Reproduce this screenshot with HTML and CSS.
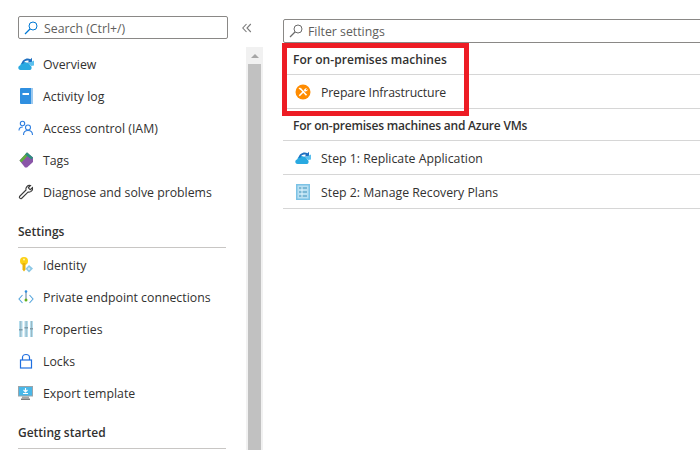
FILE: index.html
```html
<!DOCTYPE html>
<html lang="en">
<head>
<meta charset="utf-8">
<title>Site Recovery</title>
<link rel="stylesheet" href="styles.css">
</head>
<body>
<div class="page">
  <aside class="sidebar">
    <div class="search-row">
      <div class="search">
        <svg class="search-icon" width="14" height="14" viewBox="0 0 14 14"><circle cx="9" cy="5" r="4" fill="none" stroke="#0078d4" stroke-width="1"/><path d="M6 8 1 13" stroke="#0078d4" stroke-width="1.2"/></svg>
        <span>Search (Ctrl+/)</span>
      </div>
      <div class="collapse">
        <svg width="10" height="10" viewBox="0 0 10 10"><path d="M4.500 1 .8 5l3.700 4M8.800 1 5 5l3.800 4" fill="none" stroke="#7a7a7a" stroke-width="1.100"/></svg>
      </div>
    </div>
    <div class="side-body">
      <nav class="menu">
        <div class="item">
          <svg width="16" height="16" viewBox="0 0 16 16"><path d="M2.500 14C-.3 14-.5 10 2.300 9.300 2.800 6.500 5.800 5.300 8 6.500 10.500 6.300 12.300 8 12 9.500 14 9.800 14.300 13.500 12 14Z" fill="#29a9e1"/><path d="M3.500 8C4 3.500 9 1 12.500 3.200L14 1.800V6.500H9.500L11 5C9 4 6 5 5.500 7.500Z" fill="#1e6fc0"/><path d="M10 7.500 16 4.500 16 9.500 13 10Z" fill="#5bc0ee"/></svg>
          <span>Overview</span>
        </div>
        <div class="item">
          <svg width="16" height="16" viewBox="0 0 16 16"><rect x="2" y="0" width="13" height="16" rx="1" fill="#2f8fe0"/><rect x="13" y="0" width="2" height="16" fill="#9cc9ef"/><rect x="4.500" y="5" width="6.500" height="2" fill="#fff"/></svg>
          <span>Activity log</span>
        </div>
        <div class="item">
          <svg width="16" height="16" viewBox="0 0 16 16" fill="none" stroke="#2f7fe0" stroke-width="1.100"><circle cx="4.500" cy="3.500" r="2.200"/><circle cx="10" cy="7.500" r="2.500"/><path d="M1 10.500C1 8.500 2.500 7 4.800 7M5.500 15c0-6 9-6 9 0"/></svg>
          <span>Access control (IAM)</span>
        </div>
        <div class="item">
          <svg width="16" height="16" viewBox="0 0 16 16"><path d="M1.500 8.500 9 .5 15 5.500V10L9 15.500H7Z" fill="#8a55a8"/><path d="M1.500 8.500 9 .5 11 2.200 3.500 10.500Z" fill="#5fae3c"/><path d="M9 .5 15 5.500 13.500 7.500 7 2.500Z" fill="#2d8f7e"/></svg>
          <span>Tags</span>
        </div>
        <div class="item">
          <svg width="16" height="16" viewBox="0 0 16 16" fill="none" stroke="#3b3b3b" stroke-width="1.100"><path d="M1.500 12.500 8 6C7.300 3.500 9.500.8 12.500 1.500L10.300 3.800 12.200 5.700 14.500 3.500C15.200 6.500 12.500 8.700 10 8L3.500 14.500C2.500 15.300.8 13.500 1.500 12.500Z"/></svg>
          <span>Diagnose and solve problems</span>
        </div>
      </nav>
      <h2 class="section">Settings</h2>
      <nav class="menu">
        <div class="item">
          <svg width="16" height="16" viewBox="0 0 16 16"><circle cx="6" cy="4" r="4" fill="#fcd116"/><circle cx="6" cy="2.400" r="1" fill="#fff3b0"/><path d="M4.500 6h3v6.500l-1.500 2-1.500-2Z" fill="#eab308"/><path d="M11 8 15 11.500 11 15.500 7.500 11.800Z" fill="#8cc8e6"/><circle cx="11" cy="11.800" r="1.300" fill="#cfe9f6"/></svg>
          <span>Identity</span>
        </div>
        <div class="item">
          <svg width="16" height="16" viewBox="0 0 16 16" fill="none"><path d="M4.500 6 1 10l3.500 4M11.500 6 15 10l-3.500 4" stroke="#55a5dc" stroke-width="1.100"/><path d="M8 3v7" stroke="#5a7d9c"/><circle cx="8" cy="2.500" r="1.300" fill="#2f8fe0"/><circle cx="8" cy="11" r="1.500" fill="#5fae1c"/></svg>
          <span>Private endpoint connections</span>
        </div>
        <div class="item">
          <svg width="16" height="16" viewBox="0 0 16 16"><rect x="1" y="0" width="3.500" height="16" fill="#b3dcec"/><rect x="6.500" y="0" width="3.500" height="16" fill="#b3dcec"/><rect x="12" y="0" width="3" height="16" fill="#b3dcec"/><path d="M2.700 0v16M8.200 0v16M13.500 0v16" stroke="#8fa7b3" stroke-width=".7"/><rect x="1" y="8" width="3.500" height="1.500" fill="#7f9aa8"/><rect x="6.500" y="6" width="3.500" height="1.500" fill="#7f9aa8"/><rect x="12" y="7" width="3" height="1.500" fill="#7f9aa8"/></svg>
          <span>Properties</span>
        </div>
        <div class="item">
          <svg width="16" height="16" viewBox="0 0 16 16" fill="none" stroke="#1f6fe0" stroke-width="1.200"><rect x="2.500" y="7" width="11" height="8"/><path d="M4.500 7V4.500C4.500 .5 11.500 .5 11.500 4.500V7"/></svg>
          <span>Locks</span>
        </div>
        <div class="item">
          <svg width="16" height="16" viewBox="0 0 16 16"><rect x="0" y="1" width="15" height="10.500" fill="#9aa5ab"/><rect x="1" y="2" width="13" height="8.500" fill="#49b7e8"/><rect x="4" y="11.500" width="7" height="2" fill="#a5a5a5"/><rect x="3" y="13.500" width="9" height="1.500" fill="#7d7d7d"/><path d="M7.500 3v3.500M5.500 5 7.500 7 9.500 5M5 8.500h5" stroke="#fff" fill="none" stroke-width="1.100"/></svg>
          <span>Export template</span>
        </div>
      </nav>
      <h2 class="section section-last">Getting started</h2>
    </div>
  </aside>
  <div class="scrollbar">
    <div class="scroll-up"><svg width="8" height="4" viewBox="0 0 8 4"><path d="M4 0 8 4H0Z" fill="#a6a6a6"/></svg></div>
    <div class="scroll-thumb"></div>
  </div>
  <main class="content">
    <div class="filter">
      <svg width="14" height="14" viewBox="0 0 14 14"><circle cx="9" cy="5" r="4" fill="none" stroke="#6b6b6b" stroke-width="1"/><path d="M6 8 1 13" stroke="#6b6b6b" stroke-width="1.200"/></svg>
      <span>Filter settings</span>
    </div>
    <div class="group">For on-premises machines</div>
    <div class="row row-tight">
      <svg width="16" height="16" viewBox="0 0 16 16"><circle cx="8" cy="8" r="7.500" fill="#ff8c00"/><path d="M4.300 11.700 9 7M5.500 4.800 11.500 11.200" stroke="#fff" stroke-width="1.600"/><path d="M9 6.500C9 4.800 10.500 3.800 12 4.300L10.800 5.500 11.500 6.300 12.700 5.100C13 6.800 11.200 8 9.500 7.300Z" fill="#fff"/><path d="M3.500 4.500 5 3.500 6.500 5 5.500 6Z" fill="#fff"/></svg>
      <span>Prepare Infrastructure</span>
    </div>
    <div class="group group-tight">For on-premises machines and Azure VMs</div>
    <div class="row">
      <svg width="16" height="16" viewBox="0 0 16 16"><path d="M2.500 14C-.3 14-.5 10 2.300 9.300 2.800 6.500 5.800 5.300 8 6.500 10.500 6.300 12.300 8 12 9.500 14 9.800 14.300 13.500 12 14Z" fill="#29a9e1"/><path d="M3.500 8C4 3.500 9 1 12.500 3.200L14 1.800V6.500H9.500L11 5C9 4 6 5 5.500 7.500Z" fill="#1e6fc0"/><path d="M10 7.500 16 4.500 16 9.500 13 10Z" fill="#5bc0ee"/></svg>
      <span>Step 1: Replicate Application</span>
    </div>
    <div class="row">
      <svg width="16" height="16" viewBox="0 0 16 16"><rect x="1" y="0" width="14" height="16" fill="#7cc3e6"/><rect x="2.500" y="1.500" width="11" height="13" fill="#b9e0f2"/><path d="M4 4h8M4 8h8M4 12h8" stroke="#3f8fb8" stroke-width="1.200"/><path d="M7 3v10" stroke="#e3f3fb" stroke-width="1"/></svg>
      <span>Step 2: Manage Recovery Plans</span>
    </div>
    <div class="highlight"></div>
  </main>
</div>
</body>
</html>
```
FILE: styles.css
```css
* { box-sizing: border-box; }
html, body { margin: 0; height: 100%; overflow: hidden; background: #fff; }
body { font-family: "Open Sans", "Liberation Sans", sans-serif; font-size: 12.3px; color: #323130; }
svg { display: block; flex: none; }
.page { display: flex; width: 700px; height: 450px; overflow: hidden; }
.sidebar { width: 246px; flex: none; padding: 16px 0 0 18px; }
.search-row { display: flex; align-items: center; height: 23px; }
.search { width: 210px; height: 23px; flex: none; display: flex; align-items: center; gap: 6px; padding: 1px 0 0 5px; border: 1px solid #8a8886; border-radius: 2px; color: #605e5c; }
.collapse { margin-left: 14px; flex: none; }
.side-body { padding-top: 9px; }
.menu { display: flex; flex-direction: column; width: 208px; }
.item { height: 32px; display: flex; align-items: center; gap: 9px; white-space: nowrap; }
.section { margin: 14px 0 1px; width: 208px; height: 26px; border-bottom: 1px solid #c8c6c4; font: inherit; font-size: 12px; font-weight: 600; line-height: 20px; }
.section-last { margin-top: 14px; }
.scrollbar { width: 17px; flex: none; margin-top: 47px; background: #f1f1f1; display: flex; flex-direction: column; align-items: center; }
.scroll-up { height: 17px; display: flex; align-items: center; justify-content: center; }
.scroll-thumb { width: 13px; flex: 1; background: #c1c1c1; }
.content { position: relative; flex: 1; padding: 19px 0 0 20px; min-width: 0; }
.filter { height: 24px; margin-right: -4px; display: flex; align-items: center; gap: 5px; padding-left: 5px; border: 1px solid #8a8886; border-radius: 2px; color: #605e5c; }
.group { height: 32px; display: flex; align-items: center; padding: 2px 0 0 10px; border-bottom: 1px solid #d6d6d6; font-size: 12px; letter-spacing: .05px; font-weight: 600; white-space: nowrap; }
.group-tight { letter-spacing: -.2px; }
.row { height: 34px; display: flex; align-items: center; gap: 10px; padding: 1px 0 0 12px; border-bottom: 1px solid #d6d6d6; white-space: nowrap; }
.row-tight { letter-spacing: -.15px; }
.highlight { position: absolute; left: 19px; top: 43px; width: 187px; height: 73px; border: 5px solid #ed1c24; pointer-events: none; }
```
